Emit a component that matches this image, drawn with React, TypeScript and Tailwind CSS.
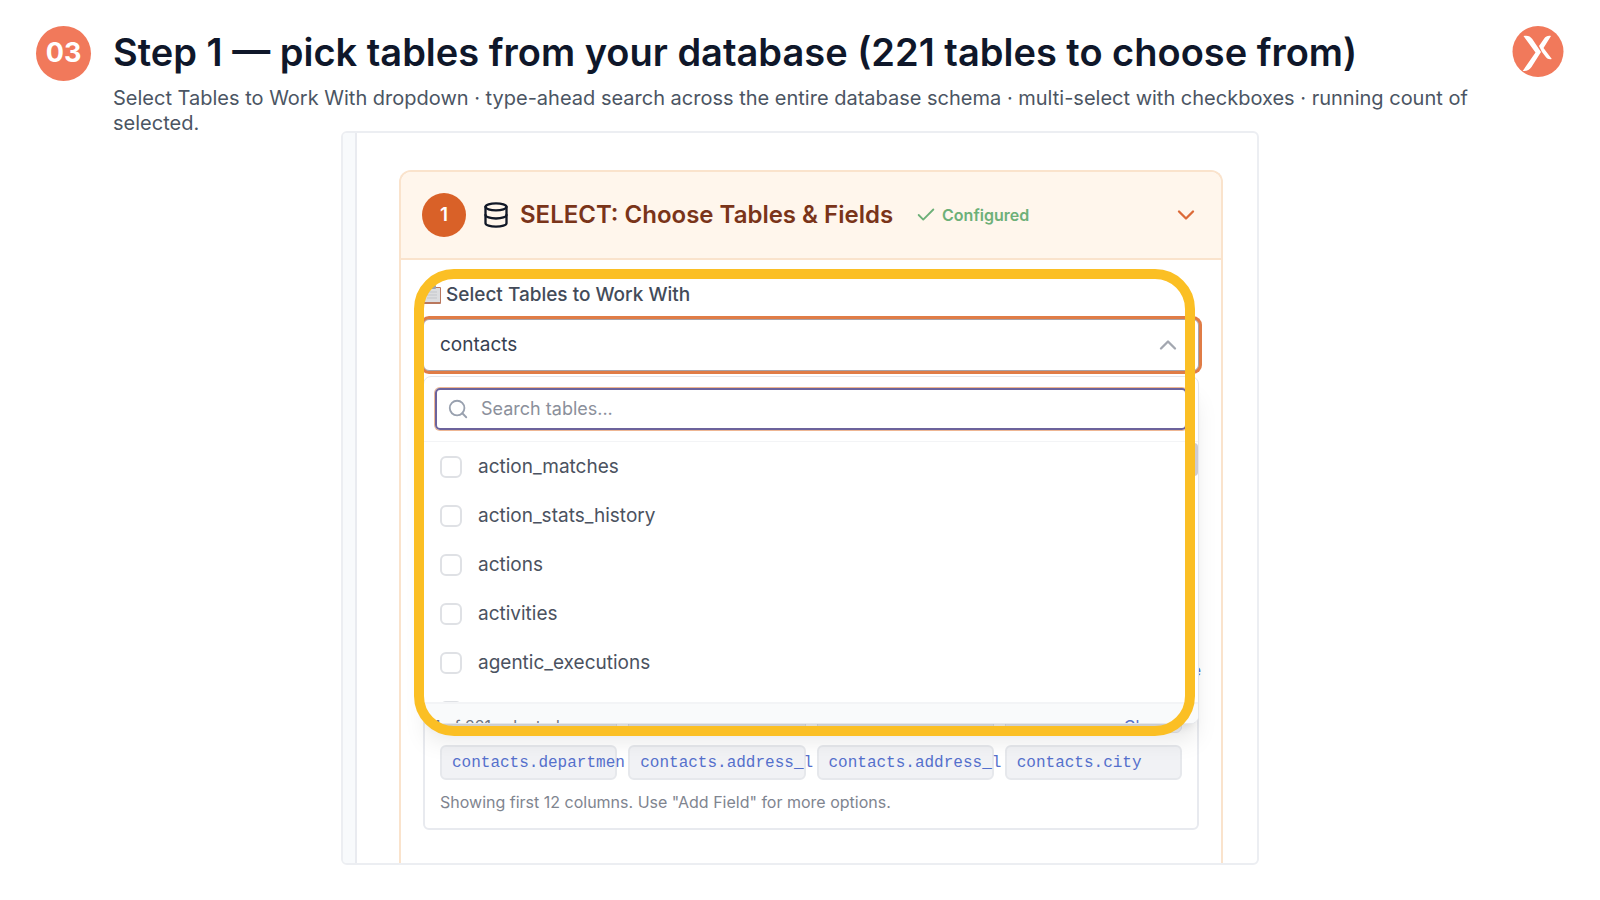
import React, { useState } from 'react';
import { Check, ChevronDown, ChevronUp, Database, Search } from 'lucide-react';

const tables = [
  'action_matches',
  'action_stats_history',
  'actions',
  'activities',
  'agentic_executions',
];

const columns = ['contacts.departmen', 'contacts.address_l', 'contacts.address_l', 'contacts.city'];

const checkboxStyle =
  'size-[22px] appearance-none rounded-md border-2 border-[#dfe1e5] bg-white checked:bg-indigo-500';

const Logo: React.FC = () => (
  <svg viewBox="0 0 52 52" className="size-[52px] shrink-0" role="img" aria-label="Logo">
    <circle cx="26" cy="25.5" r="25.5" fill="#f1795b" />
    <path d="M11.500 10c4-1 6.800.2 8.800 3L29 26 19.500 41c-2.200 3.200-5 4.500-8.800 4L23.500 26.500z" fill="#fff" />
    <path d="M39 10c-3-.6-5.200.3-6.800 2.600L27 20l3 6 3.800 5c1.600 2 3.400 2.500 6 2L31.500 22z" fill="#fff" />
  </svg>
);

const ClipboardIcon: React.FC = () => (
  <svg viewBox="0 0 18 20" className="h-5 w-[18px] shrink-0" aria-hidden="true">
    <rect x="0" y="2" width="18" height="17" rx="1" fill="#b9775d" />
    <rect x="1" y="3" width="16" height="14" fill="#dcdde0" />
    <path d="M4 7h10M4 10h10M4 13h10" stroke="#c3c5ca" />
    <rect x="5" y="0" width="8" height="4" rx="1" fill="#9ca3af" />
  </svg>
);

const SlideHeader: React.FC = () => (
  <header className="flex items-start px-9 pt-[26px]">
    <div className="flex size-[55px] shrink-0 items-center justify-center rounded-full bg-[#f1795b] text-[27px] font-bold text-white">
      03
    </div>
    <div className="ml-[22px] flex-1 pr-8">
      <h1 className="text-[38px] font-semibold leading-[52px] text-[#0f172a]">
        Step 1 — pick tables from your database (221 tables to choose from)
      </h1>
      <p className="mt-2 text-[20px] leading-[25px] text-[#4b5563]">
        Select Tables to Work With dropdown · type-ahead search across the entire database schema · multi-select with
        checkboxes · running count of selected.
      </p>
    </div>
    <Logo />
  </header>
);

const TableDropdown: React.FC = () => {
  const [selected, setSelected] = useState<string[]>([]);

  const toggle = (name: string) => {
    setSelected(selected.includes(name) ? selected.filter((t) => t !== name) : [...selected, name]);
  };

  return (
    <div className="absolute inset-x-0 top-full z-10 mt-[5px] h-[348px] overflow-hidden rounded-lg border border-gray-200 bg-white shadow-xl">
      <div className="border-b border-gray-100 p-[11px]">
        <div className="flex h-[42px] items-center gap-3 rounded-[5px] border-2 border-[#6c639c] px-[10px] ring-1 ring-[#eeb693]">
          <Search className="size-[22px] shrink-0 text-gray-400" strokeWidth={2} />
          <input
            type="text"
            aria-label="Search tables"
            placeholder="Search tables..."
            className="w-full bg-transparent text-[18px] leading-6 outline-none placeholder:text-[#8b909b]"
          />
        </div>
      </div>
      <div className="relative h-[260px] overflow-hidden">
        {tables.map((name) => (
          <label key={name} className="flex h-[49px] items-center gap-4 px-4 text-[19px] leading-[25px] text-[#4b5260]">
            <input
              type="checkbox"
              checked={selected.includes(name)}
              onChange={() => toggle(name)}
              className={checkboxStyle}
            />
            {name}
          </label>
        ))}
        {/* Next row, only its top edge is scrolled into view */}
        <div className="flex h-[49px] items-center px-4">
          <input type="checkbox" aria-label="Next table" className={checkboxStyle} />
        </div>
        {/* Scrollbar thumb */}
        <div className="absolute right-0 top-px h-[33px] w-2 rounded-sm bg-[#cfccd0]" />
      </div>
      <div className="flex justify-between border-t-2 border-gray-100 bg-gray-50 pl-[10px] pr-[13px] pt-[10px] text-[16px] leading-6">
        <span className="text-gray-500">1 of 221 selected</span>
        <button type="button" className="text-[#5570cc]">Clear all</button>
      </div>
    </div>
  );
};

const App: React.FC = () => {
  return (
    <div className="min-h-screen bg-white pb-8 font-['Inter','Liberation_Sans',sans-serif]">
      <SlideHeader />

      <main className="mx-auto -mt-[5px] flex w-full max-w-[918px] overflow-hidden rounded-md border-2 border-[#eceef2] bg-white">
        <div className="w-[14px] shrink-0 border-r-2 border-[#e9ebf0] bg-[#f8fafc]" />

        <div className="min-w-0 flex-1 pl-[42px] pr-[34px] pt-[37px]">
          <section className="rounded-t-xl border-2 border-b-0 border-[#fae3cc]">
            <div className="flex h-[88px] items-center rounded-t-[10px] border-b-2 border-[#fae3cc] bg-[#fff6ec] px-[21px]">
              <span className="flex size-11 shrink-0 items-center justify-center rounded-full bg-[#d96128] text-[19px] font-semibold text-white">
                1
              </span>
              <Database className="ml-4 size-7 shrink-0 text-[#111827]" strokeWidth={2} />
              <h2 className="ml-[10px] text-[24px] font-semibold text-[#7a3419]">SELECT: Choose Tables &amp; Fields</h2>
              <span className="ml-[22px] flex items-center gap-[5px] text-[16px] font-semibold text-[#6db078]">
                <Check className="size-[22px]" strokeWidth={2} />
                Configured
              </span>
              <button type="button" aria-label="Collapse section" className="ml-auto text-[#dc6a38]">
                <ChevronDown className="size-7" strokeWidth={2} />
              </button>
            </div>

            <div className="relative pb-[33px] pl-[22px] pr-[22px] pt-[23px]">
              <div className="flex h-6 items-center gap-[5px] text-[19px] font-medium leading-6 text-[#434b59]">
                <ClipboardIcon />
                <span id="tables-label">Select Tables to Work With</span>
              </div>

              <div className="relative mt-3">
                <button
                  type="button"
                  aria-labelledby="tables-label"
                  className="flex h-[52px] w-full items-center justify-between rounded-md border border-[#a9a3a8] bg-white px-4 text-[19px] leading-6 text-[#374151] ring-3 ring-[#e07c46]"
                >
                  contacts
                  <ChevronUp className="size-7 text-[#a3a7b0]" strokeWidth={2} />
                </button>
                <TableDropdown />
              </div>

              {/* Field area, mostly behind the open dropdown */}
              <div className="mt-[287px] flex h-6 justify-end">
                <button type="button" className="-mr-0.5 text-[16px] text-[#5570cc]">Remove</button>
              </div>

              <div className="rounded-md border-2 border-[#e8eaef] px-[15px] pb-[14px] pt-[14px]">
                <div className="grid grid-cols-4 gap-x-[11px] gap-y-3">
                  {columns.map((_, i) => (
                    <div key={i} className="h-[35px] rounded-md border border-[#e3e5ea] bg-[#f1f2f5]" />
                  ))}
                  {columns.map((name, i) => (
                    <code
                      key={i}
                      className="relative flex h-[35px] items-center whitespace-nowrap rounded-md border-2 border-[#e6e8ec] bg-[#f1f2f5] px-[10px] font-['Liberation_Mono',monospace] text-[16px] text-[#5570cc]"
                    >
                      {name}
                    </code>
                  ))}
                </div>
                <p className="mt-[10px] text-[16px] leading-6 text-[#7f8590]">
                  Showing first 12 columns. Use "Add Field" for more options.
                </p>
              </div>

              {/* Highlight frame around the table picker */}
              <div className="pointer-events-none absolute bottom-[127px] left-[13px] right-[26px] top-[9px] z-20 rounded-[40px] border-10 border-[#fbbf24]" />
            </div>
          </section>
        </div>
      </main>
    </div>
  );
};

export default App;
